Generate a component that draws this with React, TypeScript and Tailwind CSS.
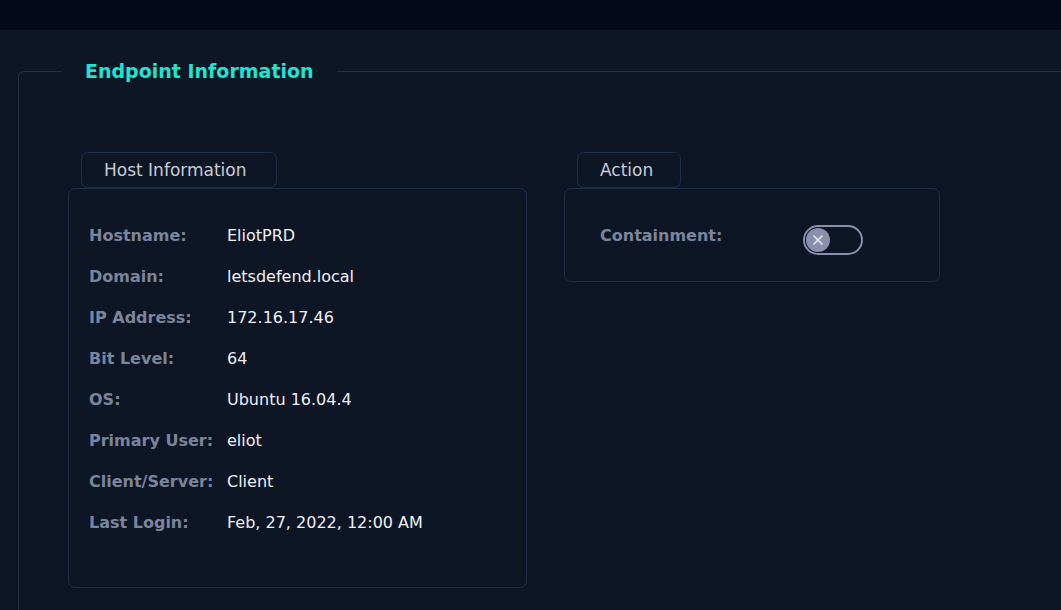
import React, { useState } from 'react';

const hostRows: { label: string; value: string }[] = [
  { label: 'Hostname:', value: 'EliotPRD' },
  { label: 'Domain:', value: 'letsdefend.local' },
  { label: 'IP Address:', value: '172.16.17.46' },
  { label: 'Bit Level:', value: '64' },
  { label: 'OS:', value: 'Ubuntu 16.04.4' },
  { label: 'Primary User:', value: 'eliot' },
  { label: 'Client/Server:', value: 'Client' },
  { label: 'Last Login:', value: 'Feb, 27, 2022, 12:00 AM' },
];

const Tab: React.FC<{ width: string; children: React.ReactNode }> = ({ width, children }) => (
  <div
    className={`ml-[13px] flex h-[36px] items-center self-start rounded-[7px] border border-[#1f2e4b] pl-[22px] pt-[1px] text-[17px] text-[#c9ccd4] ${width}`}
  >
    {children}
  </div>
);

const Toggle: React.FC = () => {
  const [on, setOn] = useState(false);
  return (
    <button
      onClick={() => setOn(!on)}
      className="relative h-[30px] w-[60px] rounded-full border-2 border-[#8b8fab] bg-[#0e1626]"
    >
      <span
        className={`absolute top-[1px] flex h-[24px] w-[24px] items-center justify-center rounded-full bg-[#8b8fab] transition-all ${
          on ? 'left-[31px]' : 'left-[1px]'
        }`}
      >
        <svg width="12" height="12" viewBox="0 0 12 12" fill="none">
          <path d="M2 2L10 10M10 2L2 10" stroke="#e6e7ef" strokeWidth="1.6" strokeLinecap="round" />
        </svg>
      </span>
    </button>
  );
};

export default function App() {
  return (
    <div
      className="h-[610px] w-[1061px] overflow-hidden bg-[#0e1626]"
      style={{ fontFamily: '"DejaVu Sans", sans-serif' }}
    >
      <div className="h-[30px] bg-[#050919]" />

      <fieldset className="ml-[18px] mt-[29px] w-[1100px] rounded-tl-[6px] border-l border-t border-[#1f2e4b] pl-[43px] pb-[40px]">
        <legend className="px-[23px] text-[19px] font-bold leading-[24px] text-[#1de5d3]">
          Endpoint Information
        </legend>

        <div className="ml-[6px] mt-[69px] flex gap-[37px]">
          {/* Host information */}
          <div className="flex w-[459px] flex-col">
            <Tab width="w-[196px]">Host Information</Tab>
            <div className="rounded-[7px] border border-[#1f2e4b] px-[20px] pt-[26px] pb-[44px]">
              {hostRows.map((row) => (
                <div key={row.label} className="flex h-[41px] items-center">
                  <span className="w-[138px] shrink-0 text-[16px] font-bold text-[#7b859c]">{row.label}</span>
                  <span className="text-[16px] text-[#eef0f5]">{row.value}</span>
                </div>
              ))}
            </div>
          </div>

          {/* Action */}
          <div className="flex w-[376px] flex-col">
            <Tab width="w-[104px]">Action</Tab>
            <div className="flex h-[94px] items-start rounded-[7px] border border-[#1f2e4b] pl-[35px] pt-[35px]">
              <span className="w-[203px] text-[16px] font-bold leading-[24px] text-[#7b859c]">Containment:</span>
              <div className="pt-[1px]">
                <Toggle />
              </div>
            </div>
          </div>
        </div>
      </fieldset>
    </div>
  );
}
